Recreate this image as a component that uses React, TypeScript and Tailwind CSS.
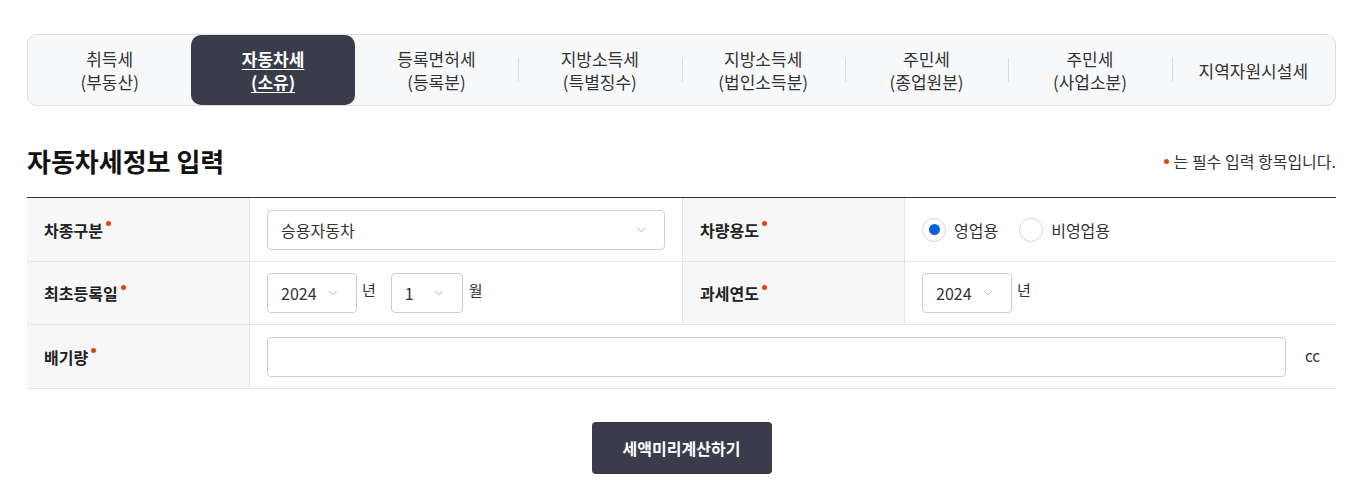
import { ChevronDown } from 'lucide-react'

const tabs = [
  ['취득세', '(부동산)'],
  ['자동차세', '(소유)'],
  ['등록면허세', '(등록분)'],
  ['지방소득세', '(특별징수)'],
  ['지방소득세', '(법인소득분)'],
  ['주민세', '(종업원분)'],
  ['주민세', '(사업소분)'],
  ['지역자원시설세'],
]

const activeTab = 1

function Required() {
  return <span className="ml-[3px] inline-block h-[5px] w-[5px] -translate-y-[6px] rounded-full bg-[#e8400c]" />
}

function Label({ children, divider }: { children: string; divider?: boolean }) {
  return (
    <div className={`flex items-center bg-[#f7f7f7] pl-[17px] text-[16px] font-bold text-[#222] ${divider ? 'border-l border-[#e5e5e5]' : ''}`}>
      {children}
      <Required />
    </div>
  )
}

function Select({ value, width }: { value: string; width: string }) {
  return (
    <div className={`flex h-[40px] ${width} items-center justify-between rounded-[4px] border border-[#cfcfcf] bg-white pl-[13px] pr-[16px] text-[16px] text-[#333]`}>
      <span>{value}</span>
      <ChevronDown className="h-[14px] w-[14px] text-[#aaa]" strokeWidth={1.5} />
    </div>
  )
}

function Radio({ checked, label }: { checked?: boolean; label: string }) {
  return (
    <label className="flex items-center gap-[8px] text-[16px] text-[#333]">
      <span className="flex h-[24px] w-[24px] items-center justify-center rounded-full border border-[#d5d5d5] bg-white">
        {checked && <span className="h-[11px] w-[11px] rounded-full bg-[#0a64d6]" />}
      </span>
      {label}
    </label>
  )
}

export default function App() {
  return (
    <div className="min-h-screen w-[1354px] bg-white pl-[27px] pr-[18px] pt-[34px] font-['Noto_Sans_CJK_KR','Noto_Sans',sans-serif] text-[#333]">
      {/* Tabs */}
      <div className="grid h-[72px] grid-cols-8 rounded-[10px] border border-[#dedede] bg-[#f7f8fa]">
        {tabs.map((t, i) => {
          const isActive = i === activeTab
          const showDivider = i > 0 && i !== activeTab && i - 1 !== activeTab
          return (
            <div key={i} className="relative flex items-center justify-center">
              {showDivider && <span className="absolute left-0 top-1/2 h-[24px] w-px -translate-y-1/2 bg-[#dcdcdc]" />}
              <div
                className={`flex h-[70px] w-full flex-col items-center justify-center text-center text-[17px] leading-[23px] ${
                  isActive ? 'rounded-[10px] bg-[#3a3b4b] font-bold text-white underline underline-offset-[3px]' : 'text-[#333]'
                }`}
              >
                {t.map((line, j) => (
                  <span key={j}>{line}</span>
                ))}
              </div>
            </div>
          )
        })}
      </div>

      {/* Heading */}
      <div className="mt-[37px] flex items-center justify-between">
        <h2 className="text-[26px] font-bold leading-[36px] text-[#111]">자동차세정보 입력</h2>
        <p className="flex items-center text-[16px] text-[#333]">
          <span className="mr-[5px] h-[5px] w-[5px] rounded-full bg-[#e8400c]" />는 필수 입력 항목입니다.
        </p>
      </div>

      {/* Form table */}
      <div className="mt-[18px] border-t border-[#333]">
        <div className="grid h-[64px] grid-cols-[222px_433px_222px_1fr] border-b border-[#e5e5e5]">
          <Label>차종구분</Label>
          <div className="flex items-center border-l border-[#e5e5e5] pl-[17px]">
            <Select value="승용자동차" width="w-[398px]" />
          </div>
          <Label divider>차량용도</Label>
          <div className="flex items-center gap-[21px] border-l border-[#e5e5e5] pl-[17px]">
            <Radio checked label="영업용" />
            <Radio label="비영업용" />
          </div>
        </div>

        <div className="grid h-[63px] grid-cols-[222px_433px_222px_1fr] border-b border-[#e5e5e5]">
          <Label>최초등록일</Label>
          <div className="flex items-center border-l border-[#e5e5e5] pl-[17px]">
            <Select value="2024" width="w-[90px]" />
            <span className="ml-[5px] mr-[15px] -translate-y-[3px] text-[15px]">년</span>
            <Select value="1" width="w-[72px]" />
            <span className="ml-[6px] -translate-y-[3px] text-[15px]">월</span>
          </div>
          <Label divider>과세연도</Label>
          <div className="flex items-center border-l border-[#e5e5e5] pl-[17px]">
            <Select value="2024" width="w-[90px]" />
            <span className="ml-[5px] -translate-y-[3px] text-[15px]">년</span>
          </div>
        </div>

        <div className="grid h-[64px] grid-cols-[222px_1fr] border-b border-[#e5e5e5]">
          <Label>배기량</Label>
          <div className="flex items-center border-l border-[#e5e5e5] pl-[17px] pr-[16px]">
            <input className="h-[40px] flex-1 rounded-[4px] border border-[#cfcfcf] bg-white px-[13px] outline-none" />
            <span className="ml-[19px] text-[15px]">cc</span>
          </div>
        </div>
      </div>

      <div className="mt-[33px] flex justify-center">
        <button className="h-[52px] w-[180px] rounded-[4px] bg-[#3a3b4b] text-[16px] font-bold text-white">
          세액미리계산하기
        </button>
      </div>
    </div>
  )
}
